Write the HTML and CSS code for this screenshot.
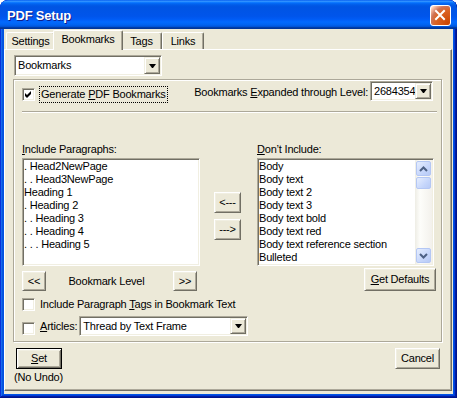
FILE: index.html
```html
<!DOCTYPE html>
<html lang="en">
<head>
  <meta charset="UTF-8">
  <title>PDF Setup</title>
  <link rel="stylesheet" href="styles.css">
</head>
<body>
  <div class="window">
    <div class="titlebar">
      <span class="title">PDF Setup</span>
      <span class="close-btn">
        <svg width="19" height="19" viewBox="0 0 19 19"><path d="M5 5 L13 13 M13 5 L5 13" stroke="#fff" stroke-width="2" stroke-linecap="square"/></svg>
      </span>
    </div>
    <div class="client">
      <div class="tabs">
        <div class="tab tab-settings">Settings</div>
        <div class="tab tab-bookmarks active">Bookmarks</div>
        <div class="tab tab-tags">Tags</div>
        <div class="tab tab-links">Links</div>
      </div>
      <div class="panel">
        <div class="combo combo-mode">
          <span class="combo-text">Bookmarks</span>
          <span class="combo-btn"><svg width="7" height="4" viewBox="0 0 7 4"><polygon points="0,0 7,0 4,4 3,4" fill="#000"/></svg></span>
        </div>

        <div class="group">
          <div class="top-row">
            <div class="gen">
              <span class="check"><svg width="11" height="11" viewBox="0 0 11 11"><polygon points="2,4 4,6 8,2 8,5 4,9 2,7" fill="#000"/></svg></span>
              <span class="focus">Generate <u>P</u>DF Bookmarks</span>
            </div>
            <span class="level-label">Bookmarks <u>E</u>xpanded through Level:</span>
            <div class="combo combo-level">
              <span class="combo-text">26843545</span>
              <span class="combo-btn"><svg width="7" height="4" viewBox="0 0 7 4"><polygon points="0,0 7,0 4,4 3,4" fill="#000"/></svg></span>
            </div>
          </div>
          <div class="separator"></div>

          <div class="lists">
            <div class="col col-left">
              <div class="list-label"><u>I</u>nclude Paragraphs:</div>
              <div class="listbox">
                <div class="item">. Head2NewPage</div>
                <div class="item">. . Head3NewPage</div>
                <div class="item">Heading 1</div>
                <div class="item">. Heading 2</div>
                <div class="item">. . Heading 3</div>
                <div class="item">. . Heading 4</div>
                <div class="item">. . . Heading 5</div>
              </div>
              <div class="level-row">
                <button class="btn btn-small">&lt;&lt;</button>
                <span class="level-text">Bookmark Level</span>
                <button class="btn btn-small">&gt;&gt;</button>
              </div>
            </div>

            <div class="col col-mid">
              <button class="btn btn-move">&lt;---</button>
              <button class="btn btn-move">---&gt;</button>
            </div>

            <div class="col col-right">
              <div class="list-label"><u>D</u>on’t Include:</div>
              <div class="listbox listbox-scroll">
                <div class="items">
                  <div class="item">Body</div>
                  <div class="item">Body text</div>
                  <div class="item">Body text 2</div>
                  <div class="item">Body text 3</div>
                  <div class="item">Body text bold</div>
                  <div class="item">Body text red</div>
                  <div class="item">Body text reference section</div>
                  <div class="item">Bulleted</div>
                </div>
                <div class="scrollbar">
                  <div class="sb-btn"><svg width="9" height="6" viewBox="0 0 9 6"><polyline points="1,5 4.5,1.5 8,5" fill="none" stroke="#4D6185" stroke-width="2"/></svg></div>
                  <div class="sb-thumb"></div>
                  <div class="sb-track"></div>
                  <div class="sb-btn"><svg width="9" height="6" viewBox="0 0 9 6"><polyline points="1,1 4.5,4.5 8,1" fill="none" stroke="#4D6185" stroke-width="2"/></svg></div>
                </div>
              </div>
              <div class="defaults-row">
                <button class="btn btn-defaults"><u>G</u>et Defaults</button>
              </div>
            </div>
          </div>

          <div class="check-row">
            <span class="check"></span>
            <span class="check-text">Include Paragraph <u>T</u>ags in Bookmark Text</span>
          </div>
          <div class="check-row articles-row">
            <span class="check"></span>
            <span class="check-text"><u>A</u>rticles:</span>
            <div class="combo combo-articles">
              <span class="combo-text">Thread by Text Frame</span>
              <span class="combo-btn"><svg width="7" height="4" viewBox="0 0 7 4"><polygon points="0,0 7,0 4,4 3,4" fill="#000"/></svg></span>
            </div>
          </div>
        </div>

        <div class="footer">
          <div class="set-col">
            <button class="btn btn-default"><u>S</u>et</button>
            <div class="no-undo">(No Undo)</div>
          </div>
          <button class="btn btn-cancel">Cancel</button>
        </div>
      </div>
    </div>
  </div>
</body>
</html>
```

FILE: styles.css
```css
* {
  box-sizing: border-box;
}

body {
  margin: 0;
  background: #fff;
  font-family: "Liberation Sans", Arial, sans-serif;
  font-size: 11px;
  letter-spacing: -0.2px;
  color: #000;
}

.window {
  width: 457px;
  height: 398px;
  display: flex;
  flex-direction: column;
  background: #0054E3;
  border-radius: 8px 8px 0 0;
  overflow: hidden;
  box-shadow: inset -1px -1px #00138C, inset 1px 1px #0831D9,
    inset -2px -2px #001EA0, inset 2px 2px #166AEE,
    inset -3px -3px #003BDA, inset 3px 3px #0855DD;
}

/* title bar */
.titlebar {
  height: 29px;
  flex: none;
  display: flex;
  align-items: flex-start;
  padding: 0 6px 0 7px;
  border-radius: 8px 8px 0 0;
  background: linear-gradient(to bottom, #0058EE 0%, #3593FF 4%, #288EFF 6%, #127DFF 8%,
    #036FFC 10%, #0262EE 14%, #0057E5 20%, #0054E3 24%, #0055EB 56%, #005BF5 66%,
    #026AFE 76%, #0062EF 86%, #0052D6 92%, #0040AB 94%, #003092 100%);
}

.title {
  margin-top: 8px;
  color: #fff;
  font-weight: bold;
  font-size: 13px;
  line-height: 15px;
  letter-spacing: -0.2px;
  text-shadow: 1px 1px #0F1E8C;
}

.close-btn {
  display: block;
  width: 21px;
  height: 21px;
  margin: 5px 0 0 auto;
  border: 1px solid #fff;
  border-radius: 3px;
  background: radial-gradient(circle at 90% 90%, #CC4600 0%, #DC6527 55%, #CD7358 70%, #FFCCB4 90%, #fff 100%);
}

.close-btn svg {
  display: block;
}

/* client area and tabs */
.client {
  flex: 1;
  margin: 0 4px 4px;
  background: #ECE9D8;
  display: flex;
  flex-direction: column;
}

.tabs {
  height: 20px;
  flex: none;
  display: flex;
  align-items: flex-end;
  padding-left: 2px;
}

.tab {
  height: 17px;
  padding-top: 2px;
  line-height: 13px;
  text-align: center;
  background: #ECE9D8;
  border-top: 1px solid #fff;
  border-left: 1px solid #fff;
  border-right: 1px solid #716F64;
  border-radius: 2px 2px 0 0;
  box-shadow: inset -1px 0 #ACA899;
}

.tab.active {
  height: 20px;
  margin: 0 -2px -1px;
  position: relative;
  z-index: 1;
}

.tab-settings { width: 49px; }
.tab-bookmarks { width: 70px; }
.tab-tags { width: 41px; }
.tab-links { width: 42px; }

.panel {
  flex: 1;
  margin: 0 1px 3px 0;
  padding: 5px 0 0 8px;
  border: 1px solid;
  border-color: #fff #716F64 #716F64 #fff;
  box-shadow: inset -1px -1px #ACA899;
}

/* classic controls */
.combo {
  display: flex;
  height: 21px;
  padding: 1px;
  background: #fff;
  border: 1px solid;
  border-color: #ACA899 #fff #fff #ACA899;
  box-shadow: inset 1px 1px #716F64, inset -1px -1px #F1EFE2;
}

.combo-text {
  flex: 1;
  padding-left: 2px;
  line-height: 16px;
  overflow: hidden;
  white-space: nowrap;
}

.combo-btn {
  width: 16px;
  flex: none;
  display: flex;
  align-items: center;
  justify-content: center;
  background: #ECE9D8;
  border: 1px solid;
  border-color: #F1EFE2 #716F64 #716F64 #F1EFE2;
  box-shadow: inset 1px 1px #fff, inset -1px -1px #ACA899;
}

.combo-btn svg {
  display: block;
}

.combo-mode {
  width: 148px;
  margin-left: 1px;
}

.check {
  width: 13px;
  height: 13px;
  flex: none;
  background: #fff;
  border: 1px solid;
  border-color: #ACA899 #fff #fff #ACA899;
  box-shadow: inset 1px 1px #716F64, inset -1px -1px #F1EFE2;
}

.check svg {
  display: block;
}

.btn {
  font: inherit;
  letter-spacing: inherit;
  color: #000;
  padding: 0;
  line-height: 13px;
  background: #ECE9D8;
  border: 1px solid;
  border-color: #fff #716F64 #716F64 #fff;
  border-radius: 0;
  box-shadow: inset 1px 1px #F1EFE2, inset -1px -1px #ACA899;
}

/* group box */
.group {
  width: 429px;
  height: 263px;
  margin-top: 3px;
  padding: 1px 0 0 8px;
  border: 1px solid #ACA899;
  box-shadow: inset 1px 1px #fff, 1px 1px #fff;
}

.top-row {
  display: flex;
  align-items: flex-start;
  height: 22px;
  padding-right: 8px;
}

.gen {
  display: flex;
  align-items: center;
  height: 17px;
  margin-top: 5px;
}

.focus {
  margin-left: 4px;
  padding: 0 1px;
  line-height: 15px;
  border: 1px dotted #000;
}

.level-label {
  margin-left: auto;
  margin-top: 5px;
  line-height: 13px;
}

.combo-level {
  width: 63px;
  height: 20px;
  margin-left: 2px;
}

.separator {
  height: 2px;
  margin: 8px 4px 0 0;
  border-top: 1px solid #ACA899;
  border-bottom: 1px solid #fff;
}

/* paragraph lists */
.lists {
  display: flex;
  margin-top: 30px;
}

.col-left { width: 178px; }

.col-mid {
  width: 27px;
  margin-left: 14px;
  padding-top: 49px;
}

.col-right {
  width: 177px;
  margin-left: 16px;
}

.list-label {
  height: 13px;
  line-height: 13px;
}

.listbox {
  height: 108px;
  margin-top: 2px;
  padding: 1px;
  background: #fff;
  border: 1px solid;
  border-color: #ACA899 #fff #fff #ACA899;
  box-shadow: inset 1px 1px #716F64, inset -1px -1px #F1EFE2;
}

.item {
  line-height: 13px;
  white-space: nowrap;
}

.listbox-scroll {
  display: flex;
}

.items {
  flex: 1;
  overflow: hidden;
}

.scrollbar {
  width: 17px;
  flex: none;
  display: flex;
  flex-direction: column;
  background: linear-gradient(to right, #EEEDE5, #FDFDFA 30%, #F3F1EC);
}

.sb-btn,
.sb-thumb {
  margin: 1px;
  border: 1px solid #B4C7F4;
  border-radius: 2px;
  background: linear-gradient(135deg, #E6EEFE, #C6D6FB 60%, #B7CAF6);
}

.sb-btn {
  height: 15px;
  display: flex;
  align-items: center;
  justify-content: center;
}

.sb-thumb {
  height: 12px;
  margin-top: 0;
}

.sb-track {
  flex: 1;
}

.level-row {
  display: flex;
  align-items: center;
  height: 20px;
  margin-top: 5px;
  padding-right: 3px;
}

.btn-small {
  width: 24px;
  height: 20px;
}

.level-text {
  flex: 1;
  text-align: center;
  padding-right: 6px;
}

.btn-move {
  display: block;
  width: 27px;
  height: 21px;
}

.btn-move + .btn-move {
  margin-top: 6px;
}

.defaults-row {
  display: flex;
  justify-content: flex-end;
  margin: 2px -2px 0 0;
}

.btn-defaults {
  width: 72px;
  height: 23px;
}

/* check rows below lists */
.check-row {
  display: flex;
  align-items: center;
  height: 17px;
  margin-top: 5px;
}

.check-text {
  margin-left: 5px;
  line-height: 13px;
}

.articles-row {
  height: 20px;
  margin-top: 3px;
  align-items: flex-start;
}

.articles-row .check {
  margin-top: 6px;
}

.articles-row .check-text {
  margin-top: 4px;
}

.combo-articles {
  width: 169px;
  height: 20px;
  margin-left: 2px;
}

/* footer */
.footer {
  display: flex;
  justify-content: space-between;
  align-items: flex-start;
  width: 429px;
  margin-top: 6px;
  padding: 0 2px 0 3px;
}

.btn-default {
  width: 46px;
  height: 21px;
  border: 1px solid #000;
  box-shadow: inset 1px 1px #fff, inset -1px -1px #716F64,
    inset 2px 2px #F1EFE2, inset -2px -2px #ACA899;
}

.btn-cancel {
  width: 45px;
  height: 21px;
}

.no-undo {
  margin: 2px 0 0 -2px;
  line-height: 13px;
}
```
